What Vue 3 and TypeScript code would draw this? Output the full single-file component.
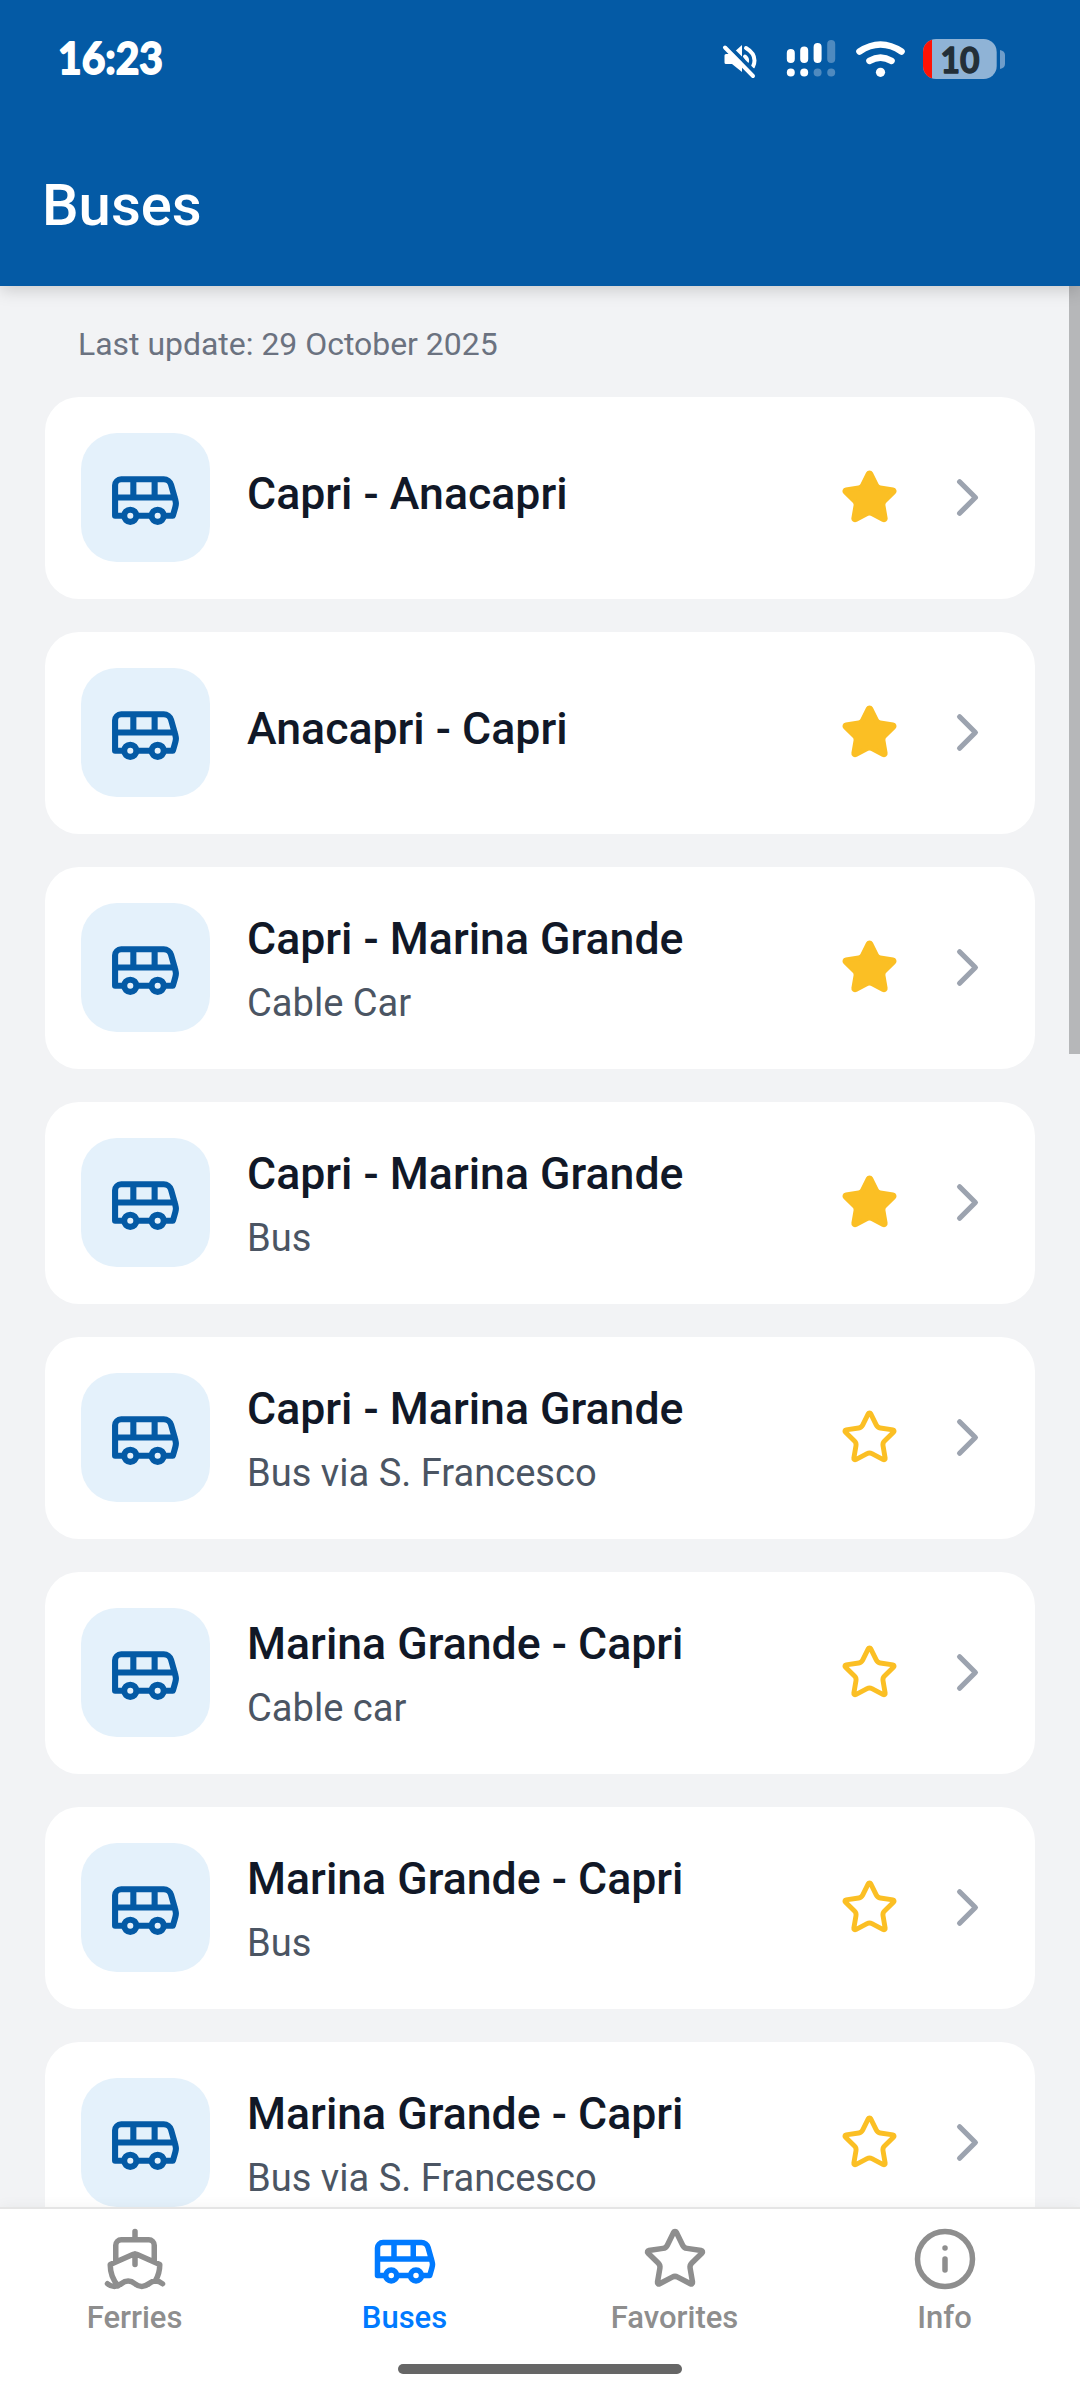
<script setup lang="ts">
interface Route {
  title: string
  note?: string
  favorite: boolean
}

const routes: Route[] = [
  { title: 'Capri - Anacapri', favorite: true },
  { title: 'Anacapri - Capri', favorite: true },
  { title: 'Capri - Marina Grande', note: 'Cable Car', favorite: true },
  { title: 'Capri - Marina Grande', note: 'Bus', favorite: true },
  { title: 'Capri - Marina Grande', note: 'Bus via S. Francesco', favorite: false },
  { title: 'Marina Grande - Capri', note: 'Cable car', favorite: false },
  { title: 'Marina Grande - Capri', note: 'Bus', favorite: false },
  { title: 'Marina Grande - Capri', note: 'Bus via S. Francesco', favorite: false },
]

const icons = {
  bus: 'M8 6v6M15 6v6M2 12h19.6M18 18h3s.5-1.7.8-2.8c.1-.4.2-.8.2-1.2 0-.4-.1-.8-.2-1.2l-1.4-5C20.1 6.8 19.1 6 18 6H4a2 2 0 0 0-2 2v10h3M9 18h5M5 18a2 2 0 1 0 4 0a2 2 0 1 0-4 0M14 18a2 2 0 1 0 4 0a2 2 0 1 0-4 0',
  ship: 'M12 10.189V14M12 2v3M19 13V7a2 2 0 0 0-2-2H7a2 2 0 0 0-2 2v6M19.38 20A11.6 11.6 0 0 0 21 14l-8.188-3.639a2 2 0 0 0-1.624 0L3 14a11.6 11.6 0 0 0 2.81 7.76M2 21c.6.5 1.2 1 2.5 1 2.5 0 2.5-2 5-2 1.3 0 1.9.5 2.5 1s1.2 1 2.5 1c2.5 0 2.5-2 5-2 1.3 0 1.9.5 2.5 1',
  star: 'M11.525 2.295a.53.53 0 0 1 .95 0l2.31 4.679a2.123 2.123 0 0 0 1.595 1.16l5.166.756a.53.53 0 0 1 .294.904l-3.736 3.638a2.123 2.123 0 0 0-.611 1.878l.882 5.14a.53.53 0 0 1-.771.56l-4.618-2.428a2.122 2.122 0 0 0-1.973 0L6.396 21.01a.53.53 0 0 1-.77-.56l.881-5.139a2.122 2.122 0 0 0-.611-1.879L2.16 9.795a.53.53 0 0 1 .294-.906l5.165-.755a2.122 2.122 0 0 0 1.597-1.16z',
  info: 'M2 12a10 10 0 1 0 20 0a10 10 0 1 0-20 0M12 16v-4M12 8h.01',
  chevron: 'm9 18 6-6-6-6',
}

const tabs = [
  { label: 'Ferries', icon: icons.ship, active: false },
  { label: 'Buses', icon: icons.bus, active: true },
  { label: 'Favorites', icon: icons.star, active: false },
  { label: 'Info', icon: icons.info, active: false },
]
</script>

<template>
  <div class="screen">
    <header class="header">
      <div class="status">
        <svg class="clock" width="150" height="70" viewBox="0 0 150 70">
          <text x="18" y="50.300" textLength="105" lengthAdjust="spacingAndGlyphs">16:23</text>
        </svg>
        <svg class="indicators" width="290" height="50" viewBox="720 35 290 50">
          <g class="mute">
            <path class="solid" d="M726 54h6l10-9v27l-10-8h-6q-1.500 0-1.500-1.500v-7q0-1.500 1.500-1.500z" />
            <path class="wave" d="M746 48q8.500 5 8.500 12.500 0 3-1.500 6M745 56.500q2.500 2 2 5" />
            <path class="cut" d="M727 44.500 757 74.500" />
            <path class="slash" d="M725 47.500 753 76" />
          </g>
          <g class="signal">
            <path d="M790.800 53v6M804.200 50.500v8.500M817.600 47v12" />
            <path d="M790.800 72.400v.01M804.200 72.400v.01" />
            <path class="faded" d="M831.200 44v15M817.600 72.400v.01M831.200 72.400v.01" />
          </g>
          <g class="wifi">
            <path d="M859.500 51.500Q880.500 37.500 901.500 51.500M869.500 60.800Q880.500 54.500 891.500 60.800" />
            <circle cx="880.500" cy="72.300" r="4.600" />
          </g>
          <clipPath id="cell"><rect x="923" y="39" width="73.700" height="40" rx="13" /></clipPath>
          <g clip-path="url(#cell)">
            <rect x="923" y="39" width="74" height="40" fill="#8fb3d6" />
            <rect x="923" y="39" width="9" height="40" fill="#ff1205" />
          </g>
          <path d="M1000 50q5 1 5 5v9q0 4-5 5z" fill="#6f9dca" />
          <text class="level" x="940.500" y="72.500" textLength="39" lengthAdjust="spacingAndGlyphs">10</text>
        </svg>
      </div>
      <h1 class="title">Buses</h1>
    </header>

    <main class="content">
      <p class="updated">Last update: 29 October 2025</p>
      <ul class="list">
        <li v-for="(route, i) in routes" :key="i" class="card">
          <div class="badge">
            <svg class="icon bus" viewBox="0 0 24 24"><path :d="icons.bus" /></svg>
          </div>
          <div class="text">
            <div class="name">{{ route.title }}</div>
            <div v-if="route.note" class="note">{{ route.note }}</div>
          </div>
          <svg class="icon star" :class="{ filled: route.favorite }" viewBox="0 0 24 24">
            <path :d="icons.star" />
          </svg>
          <svg class="icon chevron" viewBox="0 0 24 24"><path :d="icons.chevron" /></svg>
        </li>
      </ul>
      <div class="scrollbar"></div>
    </main>

    <nav class="tabbar">
      <div class="tabs">
        <div v-for="tab in tabs" :key="tab.label" class="tab" :class="{ active: tab.active }">
          <svg class="icon" viewBox="0 0 24 24"><path :d="tab.icon" /></svg>
          <span>{{ tab.label }}</span>
        </div>
      </div>
      <div class="home"></div>
    </nav>
  </div>
</template>

<style scoped>
.screen {
  display: flex;
  flex-direction: column;
  width: 1080px;
  height: 2400px;
  overflow: hidden;
  background: #f2f3f5;
  font-family: Roboto, "Liberation Sans", sans-serif;
}
.header {
  position: relative;
  z-index: 2;
  flex: none;
  height: 286px;
  box-sizing: border-box;
  padding-top: 24px;
  background: #045aa5;
  box-shadow: 0 4px 16px rgba(0, 0, 0, 0.17);
}
.status {
  display: flex;
  justify-content: space-between;
  height: 70px;
  padding: 0 70px 0 40px;
}
.indicators {
  margin-top: 11px;
}
.clock text {
  font: 700 43.5px Lato, sans-serif;
  fill: #fff;
  stroke: #fff;
  stroke-width: 1.8px;
  stroke-linejoin: round;
}
.level {
  font: 700 36px Lato, sans-serif;
  fill: #232f38;
  stroke: #232f38;
  stroke-width: 1.4px;
  stroke-linejoin: round;
}
.indicators path {
  stroke-linecap: round;
}
.solid {
  fill: #fff;
}
.wave,
.slash {
  fill: none;
  stroke: #fff;
  stroke-width: 4;
}
.cut {
  fill: none;
  stroke: #045aa5;
  stroke-width: 4;
}
.signal path {
  stroke: #fff;
  stroke-width: 8;
}
.signal .faded {
  stroke: #4f8abf;
}
.wifi path {
  fill: none;
  stroke: #fff;
  stroke-width: 6.6;
}
.wifi circle {
  fill: #fff;
}
.title {
  margin: 76px 0 0 42px;
  color: #fff;
  font-size: 58px;
  font-weight: 500;
  line-height: 70px;
}
.content {
  position: relative;
  flex: 1;
  min-height: 0;
  overflow: hidden;
}
.updated {
  margin: 39px 0 32.5px 78px;
  height: 39px;
  color: #6b7280;
  font-size: 31.95px;
  line-height: 39px;
}
.list {
  display: flex;
  flex-direction: column;
  gap: 32.75px;
  margin: 0;
  padding: 0 45px;
  list-style: none;
}
.card {
  display: flex;
  flex: none;
  align-items: center;
  box-sizing: border-box;
  height: 202.25px;
  padding: 0 36px;
  border-radius: 34px;
  background: #fff;
}
.badge {
  display: flex;
  align-items: center;
  justify-content: center;
  width: 129px;
  height: 128.5px;
  border-radius: 36px;
  background: #e4f1fb;
}
.text {
  flex: 1;
  margin-left: 37px;
  white-space: nowrap;
}
.name {
  margin-bottom: 10px;
  padding-top: 2px;
  color: #111827;
  font-size: 44.65px;
  font-weight: 500;
  line-height: 58px;
}
.note {
  padding-top: 1px;
  color: #4b5563;
  font-size: 38.1px;
  line-height: 48px;
}
.icon {
  display: block;
  flex: none;
  width: 66px;
  height: 66px;
  fill: none;
  stroke: currentColor;
  stroke-width: 2;
  stroke-linecap: round;
  stroke-linejoin: round;
}
.icon.bus {
  width: 73px;
  height: 73px;
  color: #045aa5;
}
.icon.star {
  width: 59px;
  height: 59px;
  margin: 0 37px 1px 0;
  color: #fbbf24;
}
.icon.filled {
  fill: currentColor;
}
.icon.chevron {
  width: 63px;
  height: 63px;
  margin-bottom: 1px;
  color: #9ca3af;
}
.scrollbar {
  position: absolute;
  top: 0;
  right: 0;
  width: 11px;
  height: 768px;
  background: #b6b7b9;
}
.tabbar {
  position: relative;
  z-index: 2;
  flex: none;
  height: 193px;
  box-sizing: border-box;
  border-top: 2px solid #e5e5e5;
  background: #fff;
  box-shadow: 0 0 14px rgba(0, 0, 0, 0.05);
}
.tabs {
  display: flex;
  height: 155px;
}
.tab {
  display: flex;
  flex: 1;
  flex-direction: column;
  align-items: center;
  padding-top: 17px;
  color: #8e8e8e;
  font-size: 31px;
  font-weight: 500;
  line-height: 36px;
}
.tab span {
  margin: 8px 1px 0 0;
}
.tab.active {
  color: #007aff;
}
.home {
  width: 284px;
  height: 10px;
  margin: 0 auto;
  border-radius: 5px;
  background: #666;
}
</style>
